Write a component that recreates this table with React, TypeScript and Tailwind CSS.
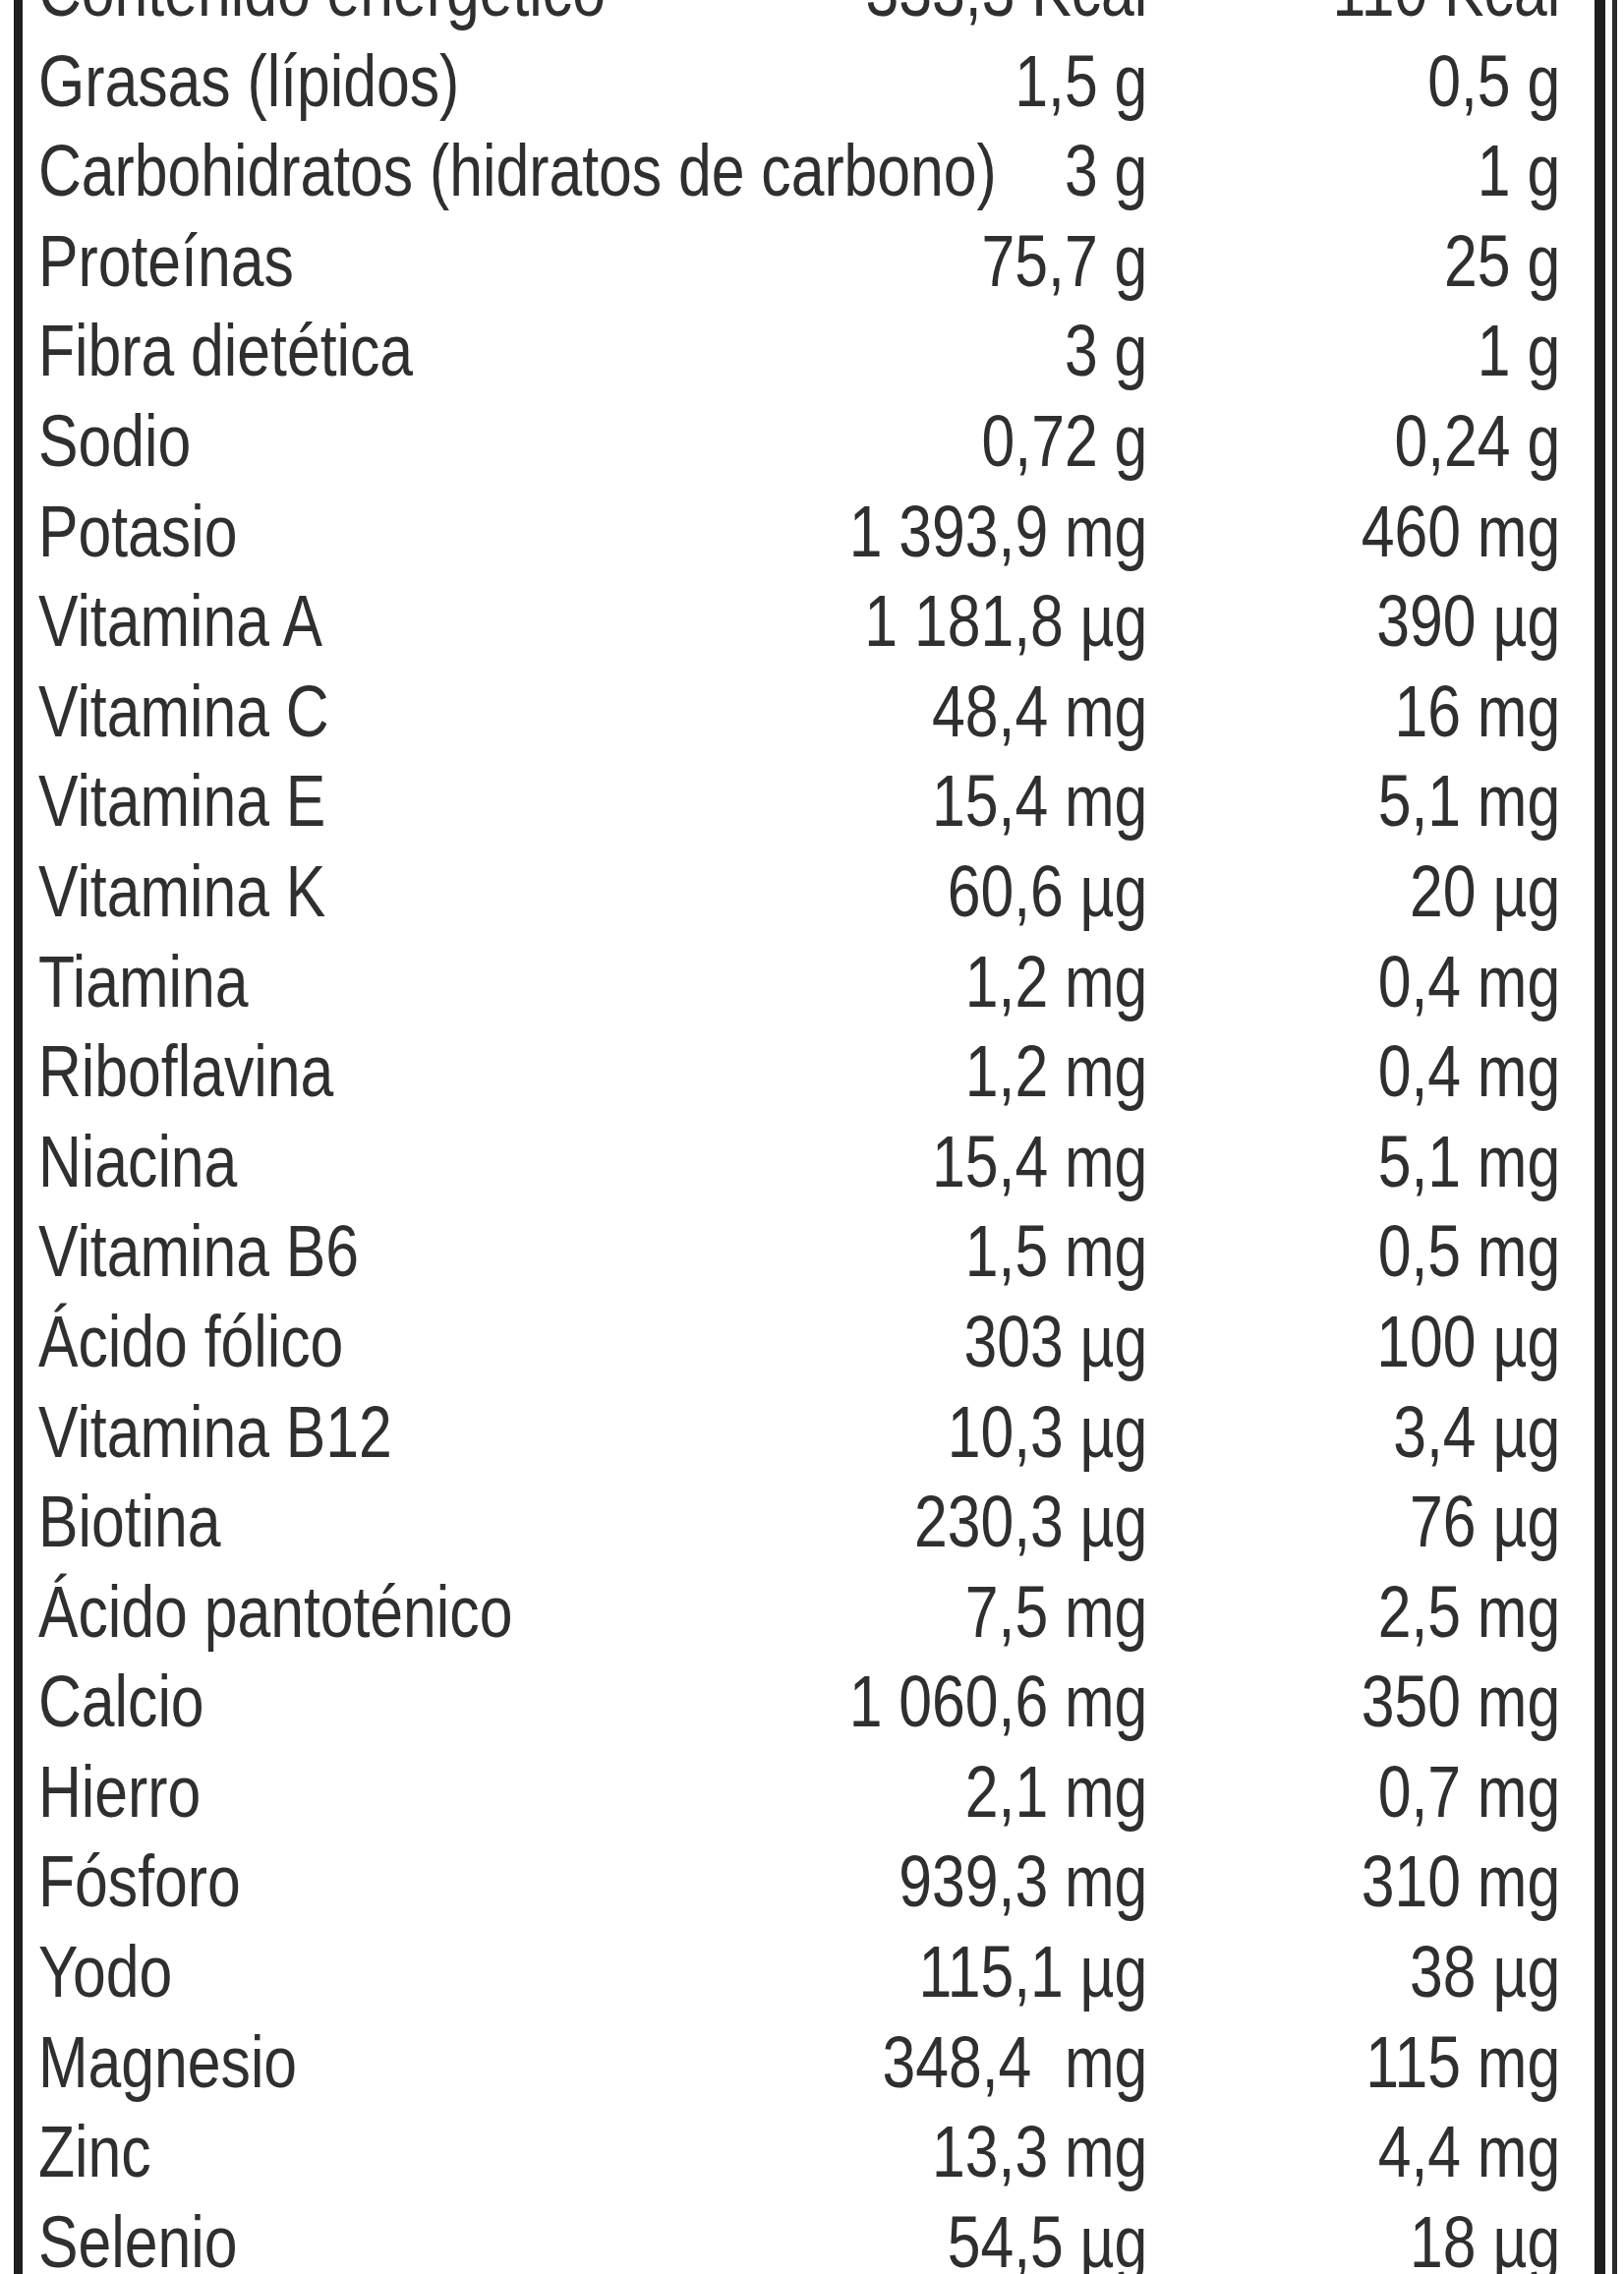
const rows: [string, string, string][] = [
  ["Contenido energético", "333,3 Kcal", "110 Kcal"],
  ["Grasas (lípidos)", "1,5 g", "0,5 g"],
  ["Carbohidratos (hidratos de carbono)", "3 g", "1 g"],
  ["Proteínas", "75,7 g", "25 g"],
  ["Fibra dietética", "3 g", "1 g"],
  ["Sodio", "0,72 g", "0,24 g"],
  ["Potasio", "1 393,9 mg", "460 mg"],
  ["Vitamina A", "1 181,8 µg", "390 µg"],
  ["Vitamina C", "48,4 mg", "16 mg"],
  ["Vitamina E", "15,4 mg", "5,1 mg"],
  ["Vitamina K", "60,6 µg", "20 µg"],
  ["Tiamina", "1,2 mg", "0,4 mg"],
  ["Riboflavina", "1,2 mg", "0,4 mg"],
  ["Niacina", "15,4 mg", "5,1 mg"],
  ["Vitamina B6", "1,5 mg", "0,5 mg"],
  ["Ácido fólico", "303 µg", "100 µg"],
  ["Vitamina B12", "10,3 µg", "3,4 µg"],
  ["Biotina", "230,3 µg", "76 µg"],
  ["Ácido pantoténico", "7,5 mg", "2,5 mg"],
  ["Calcio", "1 060,6 mg", "350 mg"],
  ["Hierro", "2,1 mg", "0,7 mg"],
  ["Fósforo", "939,3 mg", "310 mg"],
  ["Yodo", "115,1 µg", "38 µg"],
  ["Magnesio", "348,4  mg", "115 mg"],
  ["Zinc", "13,3 mg", "4,4 mg"],
  ["Selenio", "54,5 µg", "18 µg"],
];

export default function App() {
  return (
    <div className="flex h-[2313px] w-[1652px] overflow-hidden bg-white pl-[14px]">
      <div className="h-full w-[1619px] shrink-0 overflow-hidden border-l-[9px] border-r-[11px] border-[#1e1e1e] pl-[16px]">
        {/* narrow face isn't installed, so squeeze Arial-width text to ~Arial Narrow */}
        <div className="-mt-[55px] w-[1888px] origin-top-left scale-x-[0.82] font-['Liberation_Sans',Arial,sans-serif] text-[74px] leading-[91.6px] text-[#2f2f2f]">
          {rows.map(([label, a, b]) => (
            <div key={label} className="flex whitespace-pre">
              <span>{label}</span>
              <span className="flex-1 text-right">{a}</span>
              <span className="w-[512px] text-right">{b}</span>
            </div>
          ))}
        </div>
      </div>
      <div className="ml-[7px] h-full w-[5px] bg-[#2a2a2a]" />
    </div>
  );
}
